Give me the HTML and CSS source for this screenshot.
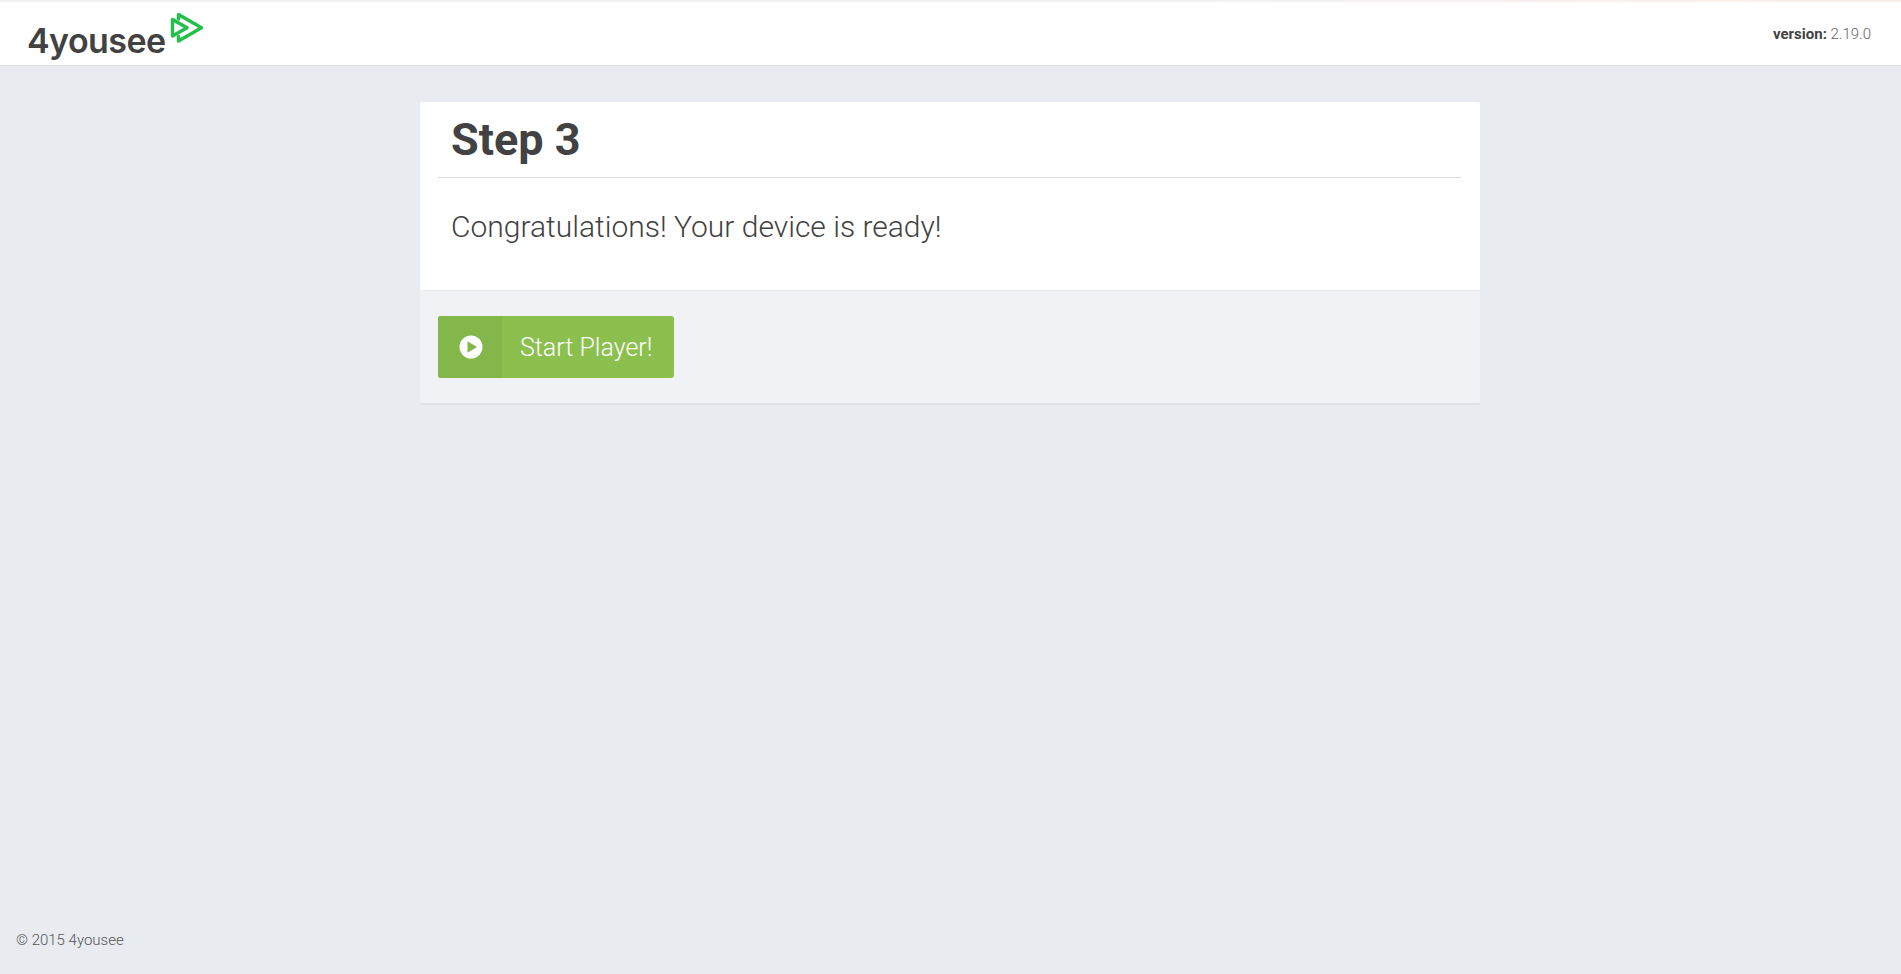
FILE: index.html
```html
<!DOCTYPE html>
<html lang="en">
<head>
  <meta charset="UTF-8" />
  <meta name="viewport" content="width=device-width, initial-scale=1.0" />
  <title>4yousee Player | Step 3</title>
  <link rel="stylesheet" href="styles.css">
</head>
<body>
  <header class="topbar">
    <a class="logo" href="#">
      <span class="logo-name">4yousee</span>
      <svg class="logo-mark" viewBox="0 0 34 32" width="34" height="32" fill="none" stroke="#22c04b" stroke-width="3.4" stroke-linejoin="round" stroke-linecap="round">
        <path d="M2.5 7.5 L2.5 24 L17 15.8 Z" />
        <path d="M8.5 7 L8.5 2.5 L31.5 15.8 L8.5 29 L8.5 24.5" />
      </svg>
    </a>
    <div class="version"><b>version:</b> 2.19.0</div>
  </header>

  <main class="page">
    <section class="card">
      <div class="card-body">
        <h1>Step 3</h1>
        <p>Congratulations! Your device is ready!</p>
      </div>
      <div class="card-footer">
        <a class="btn-start" href="#">
          <span class="btn-icon">
            <svg viewBox="0 0 24 24" width="24" height="24">
              <path fill="#fff" fill-rule="evenodd" d="M12 0.5a11.5 11.5 0 1 0 0 23a11.5 11.5 0 0 0 0-23zM8.5 6.2l9.6 5.8l-9.6 5.8z" />
            </svg>
          </span>
          <span class="btn-label">Start Player!</span>
        </a>
      </div>
    </section>
  </main>

  <footer class="copyright">© 2015 4yousee</footer>
</body>
</html>
```

FILE: styles.css
```css
html, body {
  margin: 0;
  padding: 0;
  height: 100%;
  overflow: hidden;
}
body {
  display: flex;
  flex-direction: column;
  background: #e8ebf0;
  color: #424242;
  font-family: Roboto, "Liberation Sans", sans-serif;
}
.topbar {
  display: flex;
  justify-content: space-between;
  align-items: center;
  height: 66px;
  box-sizing: border-box;
  padding: 2px 30px 0 27px;
  background: linear-gradient(90deg, #f1f2f4, #f1f2f4 50%, #f9f0ec) top / 100% 2px no-repeat, #fff;
  border-bottom: 1px solid #dcdfe3;
}
.logo {
  display: flex;
  align-items: flex-start;
  align-self: stretch;
  color: #424242;
  text-decoration: none;
}
.logo-name {
  margin-top: 20px;
  font-family: Inter, sans-serif;
  font-size: 34px;
  font-weight: 600;
  line-height: 38px;
  letter-spacing: -0.55px;
}
.logo-mark {
  margin: 10px 0 0 4px;
}
.version {
  font-size: 15px;
  font-weight: 300;
  color: #666;
}
.version b {
  font-weight: 700;
  color: #424242;
}
.page {
  flex: 1;
  display: flex;
  justify-content: center;
  padding: 36px 1px 0 0;
}
.card {
  width: 1060px;
  height: 301px;
  background: #fff;
  border-radius: 2px;
  box-shadow: 0 2px 0 #dfe1e5;
  overflow: hidden;
}
.card-body {
  height: 188px;
  padding: 0 19px 0 18px;
  border-bottom: 1px solid #e8ebf0;
}
h1 {
  margin: 0;
  padding: 0 0 0 13px;
  height: 75px;
  font-size: 45px;
  font-weight: 700;
  line-height: 76px;
  border-bottom: 1px solid #d9d9d9;
}
p {
  margin: 0;
  padding: 28px 0 0 13px;
  font-size: 30px;
  font-weight: 300;
  line-height: 42px;
}
.card-footer {
  height: 112px;
  padding: 25px 18px 0;
  box-sizing: border-box;
  background: #f0f2f6;
}
.btn-start {
  display: inline-flex;
  height: 62px;
  background: #8bc04f;
  border-radius: 3px;
  color: #fff;
  text-decoration: none;
}
.btn-icon {
  display: flex;
  align-items: center;
  justify-content: center;
  width: 64px;
  padding-left: 1px;
  box-sizing: border-box;
  background: #83b74a;
  border-radius: 3px 0 0 3px;
}
.btn-label {
  padding: 0 22px 0 18px;
  font-size: 25px;
  font-weight: 300;
  line-height: 63px;
}
.copyright {
  padding: 0 0 24px 16px;
  font-size: 15px;
  font-weight: 300;
  line-height: 20px;
  color: #555;
}
```
